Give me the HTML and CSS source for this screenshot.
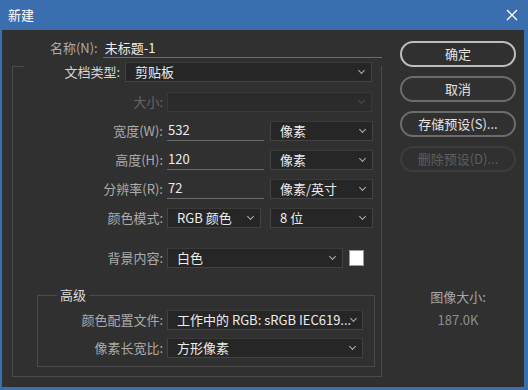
FILE: index.html
```html
<!DOCTYPE html>
<html>
<head>
  <meta charset="utf-8">
  <title>新建</title>
  <link rel="stylesheet" href="styles.css">
</head>
<body>

<div class="window">
  <div class="titlebar">
    <span class="title">新建</span>
    <svg class="close" width="12" height="12" viewBox="0 0 12 12">
      <path d="M1 1 L11 11 M11 1 L1 11" stroke="#fff" stroke-width="1.3" fill="none"/>
    </svg>
  </div>

  <div class="content">
    <div class="left">
      <div class="name-row">
        <span class="lbl name-lbl">名称(N):</span>
        <div class="field name-field">未标题-1</div>
      </div>

      <div class="group">
        <div class="group-head">
          <span class="tick"></span>
          <span class="lbl head-lbl">文档类型:</span>
          <div class="select doc-type">剪贴板<i class="caret"></i></div>
        </div>

        <div class="row first">
          <span class="lbl off">大小:</span>
          <div class="select off wide"><i class="caret"></i></div>
        </div>
        <div class="row">
          <span class="lbl">宽度(W):</span>
          <div class="field num">532</div>
          <div class="select unit">像素<i class="caret"></i></div>
        </div>
        <div class="row">
          <span class="lbl">高度(H):</span>
          <div class="field num">120</div>
          <div class="select unit">像素<i class="caret"></i></div>
        </div>
        <div class="row">
          <span class="lbl">分辨率(R):</span>
          <div class="field num">72</div>
          <div class="select unit">像素/英寸<i class="caret"></i></div>
        </div>
        <div class="row">
          <span class="lbl">颜色模式:</span>
          <div class="select mode">RGB 颜色<i class="caret"></i></div>
          <div class="select unit">8 位<i class="caret"></i></div>
        </div>
        <div class="row bg-row">
          <span class="lbl">背景内容:</span>
          <div class="select bg">白色<i class="caret"></i></div>
          <span class="swatch"></span>
        </div>

        <div class="adv">
          <div class="adv-head">
            <span class="tick adv-tick"></span>
            <span class="adv-title">高级</span>
            <span class="rule"></span>
          </div>
          <div class="row adv-row">
            <span class="lbl adv-lbl">颜色配置文件:</span>
            <div class="select profile">工作中的 RGB: sRGB IEC619...<i class="caret"></i></div>
          </div>
          <div class="row adv-row">
            <span class="lbl adv-lbl">像素长宽比:</span>
            <div class="select profile">方形像素<i class="caret"></i></div>
          </div>
        </div>
      </div>
    </div>

    <div class="right">
      <div class="buttons">
        <button class="btn default">确定</button>
        <button class="btn">取消</button>
        <button class="btn">存储预设(S)...</button>
        <button class="btn disabled">删除预设(D)...</button>
      </div>
      <div class="info">
        <div class="info-lbl">图像大小:</div>
        <div class="info-val">187.0K</div>
      </div>
    </div>
  </div>
</div>

</body>
</html>
```

FILE: styles.css
```css
* {
  box-sizing: border-box;
}

body {
  margin: 0;
  background: #2f2f2f;
  font-family: "Noto Sans CJK SC", "Noto Sans", sans-serif;
  font-size: 13px;
  color: #e6e6e6;
}

.window {
  width: 528px;
  height: 390px;
  border: solid #3b6eaf;
  border-width: 0 4px 3px 2px;
  background: #303030;
}

.titlebar {
  height: 30px;
  background: #3b6eaf;
  display: flex;
  align-items: center;
  justify-content: space-between;
  padding: 0 6px 0 6px;
  color: #fff;
}

.title {
  line-height: 30px;
}

.content {
  display: flex;
  padding-top: 9px;
}

.left {
  width: 380px;
}

.right {
  width: 116px;
  margin-left: 18px;
}

/* labels */
.lbl {
  display: block;
  text-align: right;
  color: #ababab;
  line-height: 20px;
  white-space: nowrap;
}

.lbl.off {
  color: #666;
}

/* name */
.name-row {
  display: flex;
  height: 19px;
}

.name-lbl {
  width: 96px;
  margin-right: 5px;
  line-height: 18px;
}

.field {
  border-bottom: 1px solid #6a6a6a;
  line-height: 18px;
  padding-left: 2px;
  color: #ececec;
}

.name-field {
  width: 280px;
  height: 19px;
}

/* outer group box */
.group {
  margin: 8px 0 0 10px;
  width: 370px;
  height: 311px;
  border: 1px solid #4a4a4a;
  border-top: 0;
}

.group-head {
  display: flex;
  height: 16px;
}

.tick {
  width: 11px;
  height: 0;
  border-top: 1px solid #4a4a4a;
}

.head-lbl {
  width: 96px;
  margin: -4px 5px 0 0;
  color: #d6d6d6;
}

.group-head .select {
  margin-top: -4px;
}

.select {
  display: flex;
  align-items: center;
  height: 20px;
  padding: 0 7px 0 9px;
  background: #262626;
  border: 1px solid #434343;
  border-top-color: #3a3a3a;
  color: #ececec;
  line-height: 18px;
  white-space: nowrap;
  overflow: hidden;
}

.select.off {
  background: #2b2b2b;
  border-color: #393939;
}

.caret {
  width: 5px;
  height: 5px;
  border-right: 1px solid #b0b0b0;
  border-bottom: 1px solid #b0b0b0;
  transform: rotate(45deg);
  margin: -3px 0 0 auto;
  flex: none;
}

.select.off .caret {
  border-color: #4e4e4e;
}

.doc-type {
  width: 247px;
}

/* rows */
.row {
  display: flex;
  align-items: center;
  height: 20px;
  margin-top: 9px;
}

.row.first {
  margin-top: 10px;
}

.row .lbl {
  width: 150px;
  margin-right: 4px;
}

.wide {
  width: 205px;
}

.num {
  width: 97px;
  height: 20px;
  margin-right: 6px;
  padding-left: 1px;
}

.unit {
  width: 103px;
}

.mode {
  width: 94px;
  margin-right: 9px;
}

.bg-row {
  margin-top: 20px;
}

.bg {
  width: 176px;
  margin-right: 6px;
}

.swatch {
  width: 15px;
  height: 16px;
  background: #fff;
  border: 1px solid #9a9a9a;
}

/* advanced */
.adv {
  margin: 27px 0 0 24px;
  width: 338px;
  border: 1px solid #4a4a4a;
  border-top: 0;
  padding-bottom: 8px;
}

.adv-head {
  display: flex;
  height: 7px;
}

.adv-tick {
  width: 19px;
}

.adv-title {
  margin-top: -8px;
  padding: 0 3px;
  line-height: 16px;
  color: #dadada;
}

.rule {
  flex: 1;
  border-top: 1px solid #4a4a4a;
}

.adv-row {
  margin-top: 8px;
}

.row .adv-lbl {
  width: 125px;
}

.profile {
  width: 196px;
}

/* buttons */
.buttons {
  display: flex;
  flex-direction: column;
  gap: 9px;
  margin-top: 2px;
}

.btn {
  height: 26px;
  border: 2px solid #6c6c6c;
  border-radius: 13px;
  background: #303030;
  color: #e4e4e4;
  font-family: inherit;
  font-size: 13px;
  padding: 0;
  line-height: 20px;
}

.btn.default {
  border-color: #bdbdbd;
}

.btn.disabled {
  border-color: #3d3d3d;
  color: #5e5e5e;
}

.info {
  margin-top: 116px;
  text-align: center;
  line-height: 18px;
}

.info-lbl {
  color: #a6a6a6;
}

.info-val {
  margin-top: 5px;
  color: #8e8e8e;
}
```
